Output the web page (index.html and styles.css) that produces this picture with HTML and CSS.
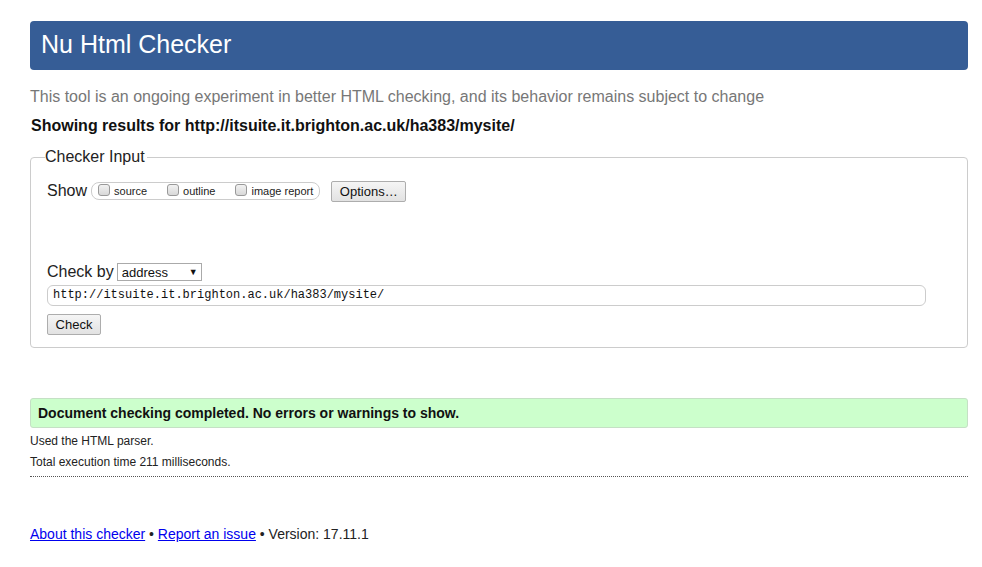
FILE: index.html
```html
<!DOCTYPE html>
<html>
<head>
<meta charset="utf-8">
<title>Nu Html Checker</title>
<link rel="stylesheet" href="styles.css">
</head>
<body>
<h1 class="title">Nu Html Checker</h1>
<p class="tagline">This tool is an ongoing experiment in better HTML checking, and its behavior remains subject to change</p>
<p class="showing">Showing results for http://itsuite.it.brighton.ac.uk/ha383/mysite/</p>
<fieldset class="input-box">
  <legend class="legend">Checker Input</legend>
  <div class="show-row">
    <span class="label">Show</span>
    <span class="checks">
      <label class="check"><input type="checkbox" class="cb"><span>source</span></label>
      <label class="check"><input type="checkbox" class="cb"><span>outline</span></label>
      <label class="check"><input type="checkbox" class="cb"><span>image report</span></label>
    </span>
    <button class="btn btn-options">Options…</button>
  </div>
  <div class="checkby-row">
    <span class="label">Check by</span>
    <span class="select">address<span class="arrow">▼</span></span>
  </div>
  <div class="url">http://itsuite.it.brighton.ac.uk/ha383/mysite/</div>
  <button class="btn btn-check">Check</button>
</fieldset>
<div class="success">Document checking completed. No errors or warnings to show.</div>
<p class="detail">Used the HTML parser.</p>
<p class="detail">Total execution time 211 milliseconds.</p>
<hr class="dots">
<p class="footer"><a href="#">About this checker</a> • <a href="#">Report an issue</a> • Version: 17.11.1</p>
</body>
</html>
```
FILE: styles.css
```css
html, body {
  margin: 0;
  padding: 0;
  background: #fff;
}
body {
  padding: 21px 14px 0 30px;
  font-family: "Liberation Sans", Arial, sans-serif;
  color: #222;
}
.title {
  margin: 0;
  height: 49px;
  line-height: 47px;
  padding-left: 11px;
  background: #365d96;
  color: #fff;
  font-size: 25px;
  font-weight: normal;
  border-radius: 4px;
}
.tagline {
  margin: 17px 0 0 0;
  font-size: 16px;
  line-height: 20px;
  color: #777;
}
.showing {
  margin: 9px 0 0 1px;
  font-size: 16px;
  line-height: 20px;
  font-weight: bold;
  color: #111;
}
.input-box {
  margin: 12px 0 0 0;
  padding: 14px 16px 12px 16px;
  border: 1px solid #ccc;
  border-radius: 4px;
  min-width: 0;
}
.legend {
  padding: 0 2px 0 0;
  margin-left: -2px;
  font-size: 16px;
  line-height: 18px;
  color: #222;
}
.show-row {
  display: flex;
  align-items: center;
  height: 22px;
}
.label {
  font-size: 16px;
  color: #222;
}
.checks {
  display: inline-flex;
  align-items: center;
  margin-left: 4px;
  height: 16px;
  padding: 0 6px 0 6px;
  border: 1px solid #ccc;
  border-radius: 8px;
}
.check {
  display: inline-flex;
  align-items: center;
  font-size: 11px;
  margin-right: 20px;
  color: #222;
}
.check:last-child { margin-right: 0; }
.cb {
  appearance: none;
  -webkit-appearance: none;
  width: 12px;
  height: 12px;
  margin: -3px 4px 0 0;
  border: 1px solid #999;
  border-radius: 3px;
  background: linear-gradient(#f2f2f2, #d8d8d8);
}
.btn {
  font-family: "Liberation Sans", Arial, sans-serif;
  color: #111;
  background: linear-gradient(#f5f5f5, #e2e2e2);
  border: 1px solid #adadad;
  border-radius: 2px;
  padding: 0 7px;
}
.btn-options {
  margin-left: 11px;
  height: 21px;
  font-size: 13px;
  width: 75px;
}
.checkby-row {
  display: flex;
  align-items: center;
  margin-top: 60px;
  height: 20px;
}
.select {
  display: inline-flex;
  align-items: center;
  justify-content: space-between;
  margin-left: 3px;
  width: 76px;
  height: 16px;
  padding: 0 3px 0 4px;
  border: 1px solid #aaa;
  font-size: 13px;
  color: #111;
}
.arrow { font-size: 9px; }
.url {
  margin-top: 3px;
  height: 19px;
  line-height: 19px;
  padding-left: 5px;
  width: 872px;
  border: 1px solid #ccc;
  border-radius: 6px;
  font-family: "Liberation Mono", monospace;
  font-size: 12px;
  color: #111;
}
.btn-check {
  margin-top: 8px;
  height: 21px;
  font-size: 13px;
  width: 54px;
  display: block;
}
.success {
  margin-top: 50px;
  height: 28px;
  line-height: 28px;
  padding-left: 7px;
  background: #ccffcc;
  border: 1px solid #c5e0c5;
  border-radius: 3px;
  font-size: 14px;
  font-weight: bold;
  color: #111;
}
.detail {
  margin: 6px 0 0 0;
  font-size: 12px;
  line-height: 15px;
  color: #222;
}
.detail:first-of-type { margin-top: 7px; }
.dots {
  margin: 6px 0 0 0;
  border: 0;
  border-top: 1px dotted #555;
  height: 0;
}
.footer {
  margin: 49px 0 0 0;
  font-size: 14px;
  line-height: 16px;
  color: #222;
}
.footer a { color: #00e; }
```
